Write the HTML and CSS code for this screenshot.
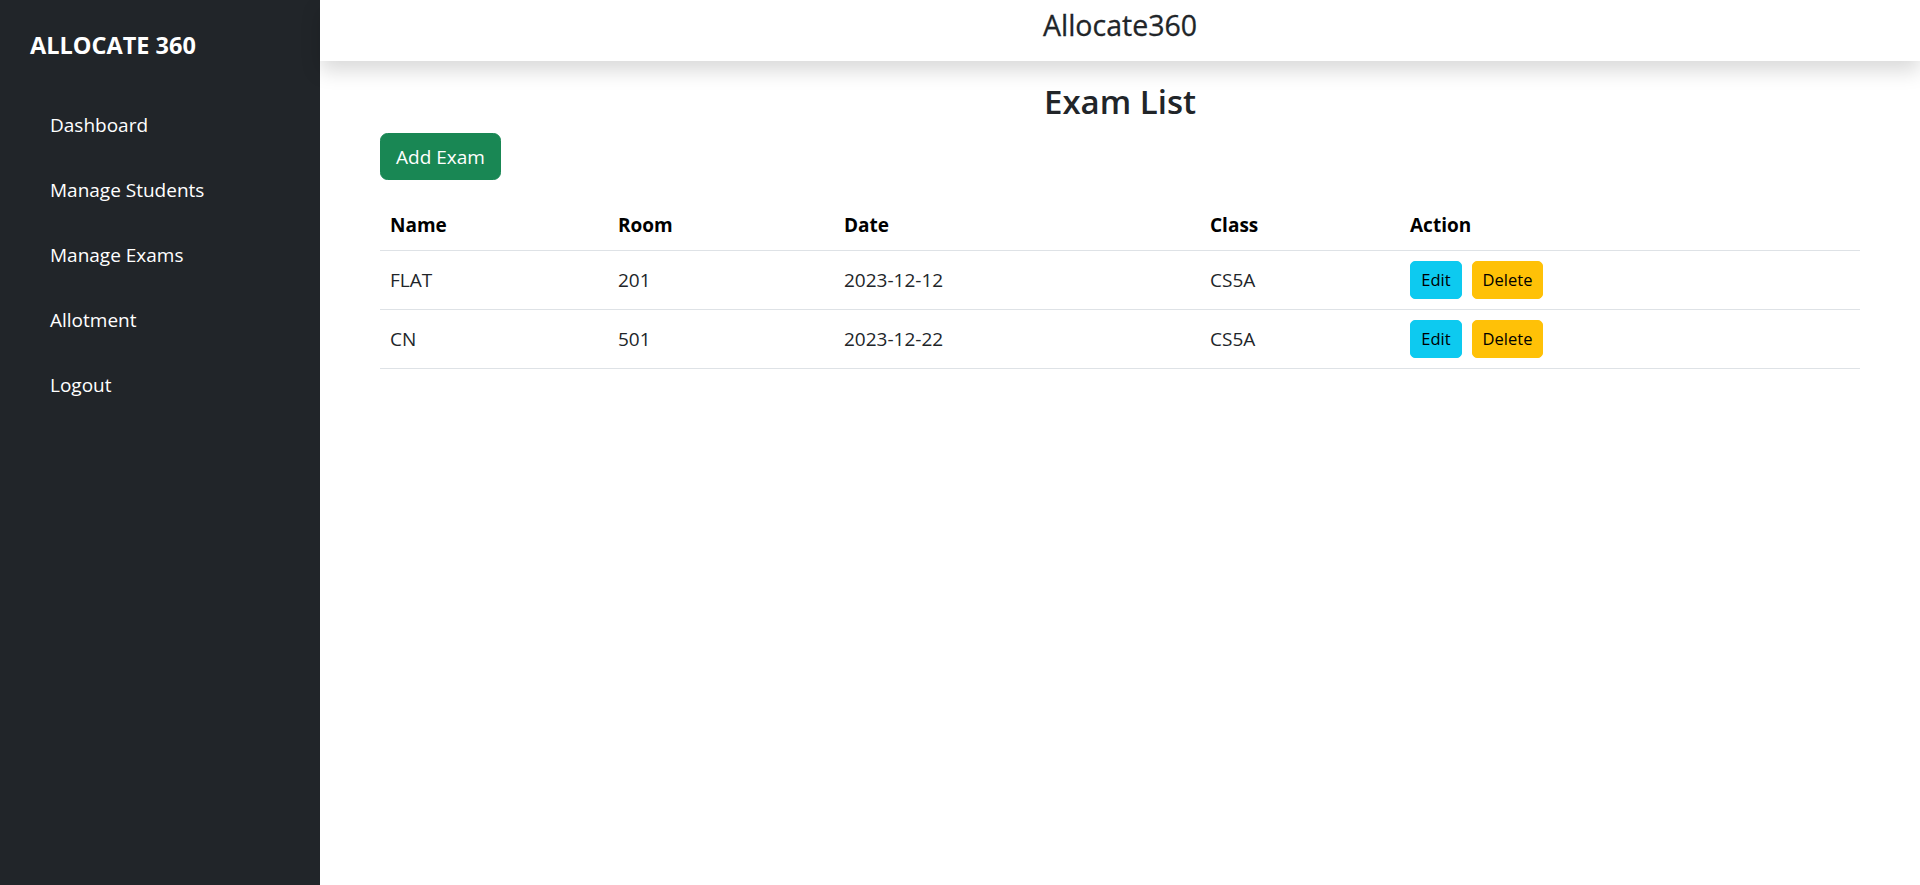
FILE: index.html
```html
<!DOCTYPE html>
<html lang="en">
<head>
<meta charset="utf-8">
<title>Allocate360 - Exam List</title>
<link rel="stylesheet" href="styles.css">
</head>
<body>
<div class="layout">
  <aside class="sidebar">
    <div class="brand">ALLOCATE 360</div>
    <nav class="nav">
      <a class="nav-link" href="#">Dashboard</a>
      <a class="nav-link" href="#">Manage Students</a>
      <a class="nav-link" href="#">Manage Exams</a>
      <a class="nav-link" href="#">Allotment</a>
      <a class="nav-link" href="#">Logout</a>
    </nav>
  </aside>
  <main class="main">
    <header class="topbar">
      <h4 class="topbar-title">Allocate360</h4>
    </header>
    <section class="content">
      <h3 class="page-title">Exam List</h3>
      <button class="btn btn-success">Add Exam</button>
      <table class="table">
        <thead>
          <tr>
            <th class="col-name">Name</th>
            <th class="col-room">Room</th>
            <th class="col-date">Date</th>
            <th class="col-class">Class</th>
            <th class="col-action">Action</th>
          </tr>
        </thead>
        <tbody>
          <tr>
            <td>FLAT</td>
            <td>201</td>
            <td>2023-12-12</td>
            <td>CS5A</td>
            <td><div class="actions"><button class="btn btn-sm btn-info">Edit</button><button class="btn btn-sm btn-warning">Delete</button></div></td>
          </tr>
          <tr>
            <td>CN</td>
            <td>501</td>
            <td>2023-12-22</td>
            <td>CS5A</td>
            <td><div class="actions"><button class="btn btn-sm btn-info">Edit</button><button class="btn btn-sm btn-warning">Delete</button></div></td>
          </tr>
        </tbody>
      </table>
    </section>
  </main>
</div>
</body>
</html>
```
FILE: styles.css
```css
* { box-sizing: border-box; }
html, body { margin: 0; padding: 0; }
body {
  font-family: "Open Sans", "Noto Sans", "Liberation Sans", sans-serif;
  font-size: 19px;
  line-height: 30px;
  color: #212529;
  background: #fff;
}
.layout {
  display: flex;
  min-height: 100vh;
}
.sidebar {
  width: 320px;
  flex: 0 0 320px;
  background: #212529;
  color: #fff;
  padding: 30px 30px 0 30px;
}
.brand {
  font-size: 23.5px;
  font-weight: 700;
  line-height: 30px;
}
.nav {
  display: flex;
  flex-direction: column;
  margin-top: 32px;
}
.nav-link {
  color: #fff;
  text-decoration: none;
  padding: 17.5px 20px;
  line-height: 30px;
}
.main {
  flex: 1;
  min-width: 0;
}
.topbar {
  height: 61px;
  background: #fff;
  box-shadow: 0 10px 20px rgba(0,0,0,0.15);
  text-align: center;
  padding-top: 7px;
  position: relative;
}
.topbar-title {
  margin: 0;
  font-size: 28.5px;
  font-weight: 500;
  line-height: 36px;
  color: #212529;
  -webkit-text-stroke: 0.3px #212529;
}
.content {
  padding: 20px 60px 0 60px;
}
.page-title {
  margin: 0 0 10px 0;
  text-align: center;
  font-size: 33px;
  font-weight: 600;
  line-height: 42px;
  color: #212529;
}
.btn {
  display: inline-block;
  font-family: inherit;
  border: 1px solid transparent;
  cursor: pointer;
}
.btn-success {
  background: #198754;
  border-color: #198754;
  color: #fff;
  font-size: 19px;
  line-height: 30px;
  padding: 7.5px 14px;
  border-radius: 7.5px;
  width: 121px;
}
.table {
  width: 100%;
  margin-top: 20px;
  border-collapse: collapse;
  table-layout: fixed;
}
.table th, .table td {
  padding: 10px;
  border-bottom: 1px solid #dee2e6;
  text-align: left;
  vertical-align: middle;
}
.table th {
  font-weight: 700;
  color: #000;
}
.col-name { width: 228px; }
.col-room { width: 226px; }
.col-date { width: 366px; }
.col-class { width: 200px; }
.actions {
  display: flex;
  gap: 10px;
}
.btn-sm {
  font-size: 16.5px;
  line-height: 26px;
  padding: 5px 9px;
  border-radius: 5px;
  color: #000;
  height: 38px;
}
.btn-info {
  background: #0dcaf0;
  border-color: #0dcaf0;
  width: 52px;
}
.btn-warning {
  background: #ffc107;
  border-color: #ffc107;
  width: 71px;
}
```
